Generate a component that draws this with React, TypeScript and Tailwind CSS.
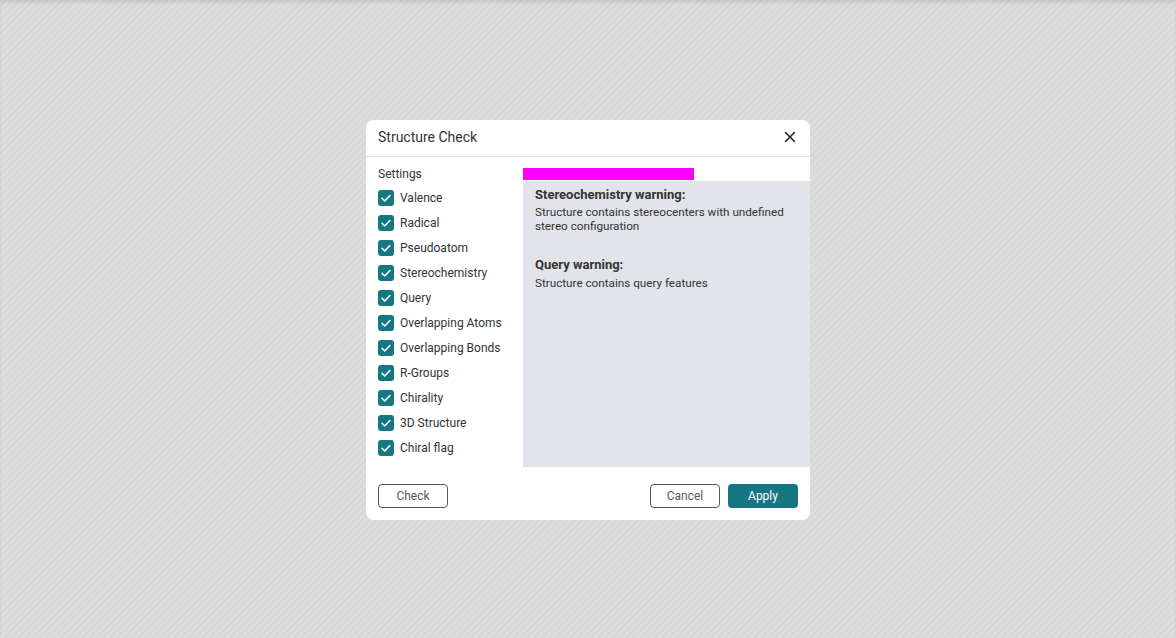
import React from "react";

const settings = [
  "Valence",
  "Radical",
  "Pseudoatom",
  "Stereochemistry",
  "Query",
  "Overlapping Atoms",
  "Overlapping Bonds",
  "R-Groups",
  "Chirality",
  "3D Structure",
  "Chiral flag",
];

const CheckIcon = () => (
  <svg viewBox="0 0 16 16" className="h-4 w-4" fill="none">
    <rect width="16" height="16" rx="3" fill="#167782" />
    <path
      d="M4 8.3l2.7 2.6 5.2-5.4"
      stroke="#fff"
      strokeWidth="1.5"
      strokeLinecap="round"
      strokeLinejoin="round"
    />
  </svg>
);

const App = () => {
  return (
    <div className="flex h-[638px] w-full items-center justify-center bg-[repeating-linear-gradient(135deg,#dddddd_0_3px,#d7d7d7_3px_5px)] pt-[2px] shadow-[inset_0_3px_3px_rgba(0,0,0,0.07)] font-['Roboto',sans-serif]">
      <div className="flex h-[400px] w-[444px] flex-col overflow-hidden rounded-lg bg-white">
        {/* header */}
        <div className="flex h-[37px] items-center justify-between border-b border-[#e1e5ea] pl-3 pr-[14px]">
          <span className="mb-[2px] text-[14px] text-[#333]">Structure Check</span>
          <svg
            viewBox="0 0 12 12"
            className="mb-[2px] h-3 w-3"
            fill="none"
            stroke="#222"
            strokeWidth="1.6"
            strokeLinecap="round"
          >
            <path d="M1.5 1.5l9 9M10.5 1.5l-9 9" />
          </svg>
        </div>

        {/* body */}
        <div className="flex pt-[11px]">
          <div className="w-[157px] shrink-0 pl-3">
            <div className="-mt-[2px] h-4 text-[12px] leading-4 text-[#333]">Settings</div>
            <div className="pt-[3px]">
              {settings.map((s) => (
                <div key={s} className="flex h-[25px] items-center gap-[6px]">
                  <CheckIcon />
                  <span className="text-[12px] text-[#333]">{s}</span>
                </div>
              ))}
            </div>
          </div>
          <div className="flex flex-1 flex-col">
            <div className="h-3 w-[171px] bg-[#ff00ff]" />
            <div className="mt-px h-[286px] bg-[#e1e4e9] px-3 pt-[6px] text-[11.7px] text-[#333]">
              <div className="text-[13px] font-bold leading-4">Stereochemistry warning:</div>
              <div className="mt-[2px] leading-[14px]">
                Structure contains stereocenters with undefined
                <br />
                stereo configuration
              </div>
              <div className="mt-[24px] text-[13px] font-bold leading-4">Query warning:</div>
              <div className="mt-[3px] leading-[14px]">
                Structure contains query features
              </div>
            </div>
          </div>
        </div>

        {/* footer */}
        <div className="mt-auto flex items-center justify-between px-3 pb-3">
          <button className="h-6 w-[70px] rounded border border-[#585858] bg-white text-[12px] text-[#585858]">
            Check
          </button>
          <div className="flex gap-2">
            <button className="h-6 w-[70px] rounded border border-[#585858] bg-white text-[12px] text-[#585858]">
              Cancel
            </button>
            <button className="h-6 w-[70px] rounded bg-[#167782] text-[12px] text-white">
              Apply
            </button>
          </div>
        </div>
      </div>
    </div>
  );
};

export default App;
